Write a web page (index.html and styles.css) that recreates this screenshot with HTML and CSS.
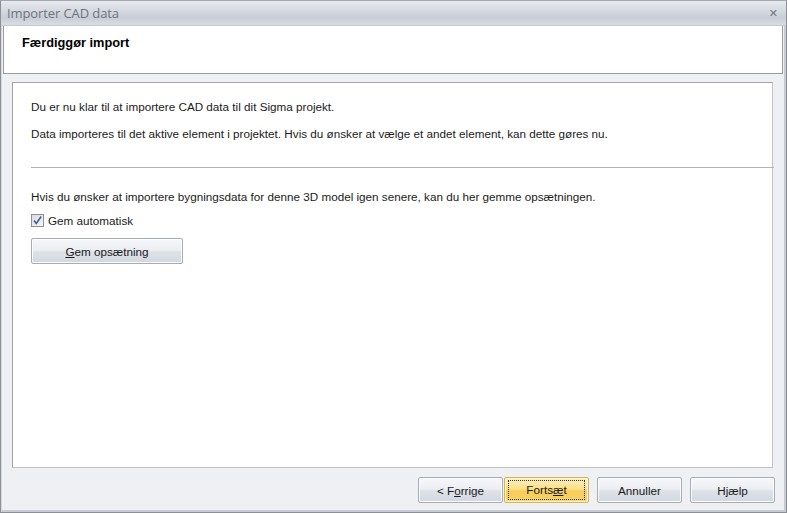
FILE: index.html
```html
<!DOCTYPE html>
<html>
<head>
    <meta charset="utf-8" />
    <title>Importer CAD data</title>
    <link rel="stylesheet" href="styles.css">
</head>
<body>
    <div class="window">
        <div class="titlebar">
            <span class="title">Importer CAD data</span>
            <span class="close">&#x2715;</span>
        </div>

        <div class="header">
            <h1>Færdiggør import</h1>
        </div>

        <div class="main">
            <div class="panel">
                <div class="intro">
                    <p>Du er nu klar til at importere CAD data til dit Sigma projekt.</p>
                    <p>Data importeres til det aktive element i projektet. Hvis du ønsker at vælge et andet element, kan dette gøres nu.</p>
                </div>
                <div class="rule"></div>
                <div class="save">
                    <p>Hvis du ønsker at importere bygningsdata for denne 3D model igen senere, kan du her gemme opsætningen.</p>
                    <label class="check">
                        <span class="box">
                            <svg width="11" height="11" viewBox="0 0 11 11">
                                <path d="M2 5.5 L4.3 8.5 L9.2 1.5" fill="none" stroke="#3b5ea8" stroke-width="1.6"/>
                            </svg>
                        </span>
                        Gem automatisk
                    </label>
                    <button class="btn wide"><u>G</u>em opsætning</button>
                </div>
            </div>

            <div class="footer">
                <button class="btn">&lt; F<u>o</u>rrige</button>
                <button class="btn primary"><span class="focus">Forts<u>æ</u>t</span></button>
                <button class="btn gap">Annuller</button>
                <button class="btn gap">Hjælp</button>
            </div>
        </div>
    </div>
</body>
</html>
```

FILE: styles.css
```css
html, body {
  margin: 0;
  padding: 0;
}

body {
  width: 787px;
  height: 513px;
  font-family: "Liberation Sans", Arial, sans-serif;
  font-size: 11.7px;
  color: #1b1b1b;
  overflow: hidden;
}

.window {
  box-sizing: border-box;
  width: 787px;
  height: 513px;
  border: 1px solid #8c9096;
  border-top-color: #a4a8ae;
  background: #eff0f3;
  display: flex;
  flex-direction: column;
  box-shadow: inset 1px 0 0 #d5d8dd, inset -2px 0 0 #c8ccd2, inset 0 -2px 0 #c8ccd2;
}

.titlebar {
  height: 24px;
  display: flex;
  align-items: center;
  justify-content: space-between;
  padding: 0 8px 0 6px;
  background: linear-gradient(#e7eaee, #d3d8df 45%, #c8ced7 70%, #d9dde3);
  border-bottom: 1px solid #c3c8cf;
}

.title {
  font-family: "Open Sans", sans-serif;
  font-size: 13px;
  color: #6d737d;
  letter-spacing: -0.1px;
}

.close {
  font-family: "DejaVu Sans", sans-serif;
  font-size: 11px;
  font-weight: bold;
  color: #6f7786;
}

.header {
  height: 47px;
  margin: 0 3px 0 2px;
  background: #fff;
  border: 1px solid #9b9b9b;
  border-top: none;
}

.header h1 {
  margin: 0;
  padding: 9px 0 0 18px;
  font-size: 12.8px;
  font-weight: bold;
  color: #000;
}

.main {
  flex: 1;
  display: flex;
  flex-direction: column;
  padding: 8px 13px 0 11px;
}

.panel {
  height: 384px;
  background: #fff;
  border: 1px solid #a3a3a3;
  border-right-color: #c2c2c2;
  border-bottom-color: #c2c2c2;
}

.panel p {
  margin: 0;
}

.intro {
  padding: 17px 0 0 18px;
}

.intro p + p {
  margin-top: 14px;
}

.rule {
  margin: 27px -2px 0 18px;
  height: 1px;
  background: #b5b5b5;
}

.save {
  padding: 22px 0 0 18px;
}

.check {
  display: flex;
  align-items: center;
  gap: 4px;
  margin-top: 11px;
}

.box {
  box-sizing: border-box;
  width: 13px;
  height: 13px;
  border: 1px solid #8f8f8f;
  background: linear-gradient(135deg, #dcdcdc, #f6f6f6);
  display: flex;
  align-items: center;
  justify-content: center;
}

.btn {
  box-sizing: border-box;
  height: 26px;
  font-family: "Liberation Sans", Arial, sans-serif;
  font-size: 11.7px;
  color: #1b1b1b;
  border: 1px solid #a9adb3;
  border-radius: 2px;
  background: linear-gradient(#f6f7f9, #eceef2 45%, #dde1e7 55%, #d3d8e0);
  box-shadow: inset 0 0 0 1px #fbfcfd;
  padding: 0;
}

.btn.wide {
  width: 152px;
  margin-top: 11px;
}

.footer {
  display: flex;
  justify-content: flex-end;
  gap: 1px;
  padding-top: 9px;
  margin-right: -2px;
}

.footer .btn {
  width: 85px;
}

.footer .gap {
  margin-left: 7px;
}

.btn.primary {
  background: linear-gradient(#fdf0c2, #fbe08a 45%, #f8cd56 55%, #f7d36c);
  border-color: #d6b357;
  box-shadow: inset 0 0 0 1px #fff6d6;
  display: flex;
  align-items: center;
  justify-content: center;
}

.focus {
  box-sizing: border-box;
  width: 77px;
  height: 20px;
  line-height: 18px;
  border: 1px dotted #333;
}
```
